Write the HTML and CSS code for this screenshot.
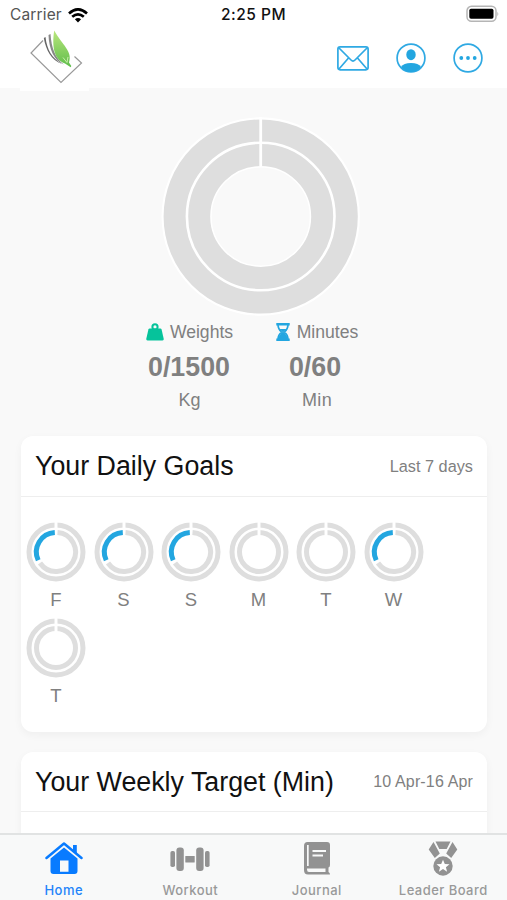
FILE: index.html
```
<!DOCTYPE html>
<html lang="en">
<head>
<meta charset="utf-8">
<title>Home</title>
<link rel="stylesheet" href="styles.css">
</head>
<body>
<svg class="defs" width="0" height="0" aria-hidden="true">
  <defs>
    <linearGradient id="leaf" x1="0" y1="0" x2="0" y2="1"><stop offset="0" stop-color="#b9e67c"/><stop offset="1" stop-color="#5fbd4b"/></linearGradient>
    <symbol id="ring" viewBox="0 0 60 60">
      <g fill="none" stroke="#dedede" stroke-width="5">
        <circle cx="30" cy="30" r="27"/><circle cx="30" cy="30" r="19.5"/>
      </g>
      <path d="M30 0V15" stroke="#fff" stroke-width="3"/>
    </symbol>
    <symbol id="ring-active" viewBox="0 0 60 60">
      <circle cx="30" cy="30" r="27" fill="none" stroke="#dedede" stroke-width="5"/>
      <path d="M31.5 10.5A19.5 19.5 0 1 1 14 41" fill="none" stroke="#dedede" stroke-width="5"/>
      <path d="M30 0V6" stroke="#fff" stroke-width="3"/>
      <path d="M28.8 10.5A19.5 19.5 0 0 0 12.2 38.2" fill="none" stroke="#23a6e0" stroke-width="5"/>
    </symbol>
  </defs>
</svg>
<div class="app">
  <div class="status">
    <div class="carrier"><span>Carrier</span>
      <svg width="20" height="15" viewBox="0 0 20 15"><g fill="none" stroke="#000" stroke-width="2.7"><path d="M1 5.4Q10-2.6 19 5.4"/><path d="M4.2 8.8Q10 3.8 15.8 8.8"/></g><path d="M6.9 11.2Q10 8.7 13.1 11.2L10 14.4Z"/></svg>
    </div>
    <time>2:25 PM</time>
    <svg class="battery" width="34" height="18" viewBox="0 0 34 18"><rect x="2" y="1.3" width="29" height="15" rx="4.5" fill="#fff" stroke="#b5b5b5" stroke-width="1.5"/><rect x="4.3" y="3.8" width="24.2" height="10" rx="1.7"/><path d="M32.4 6.7Q34.2 9 32.4 11.2Z" fill="#b5b5b5"/></svg>
  </div>
  <header class="header">
    <div class="logo">
      <svg width="70" height="61" viewBox="20 30 70 61">
        <path d="M43 40.500L31 53L61 82.5L81.500 63L74.500 56.500" fill="none" stroke="#999" stroke-width="1.200"/>
        <path d="M43.800 38C46 50 51 60 62 64C52 58 47 50 45.500 37" fill="#666"/>
        <path d="M48.500 35C49 49 54 61 64 64.500C55 58 51.500 48 50.500 34" fill="#888"/>
        <path d="M54.200 30.500C52.500 42 52 59 65 63.500L70.700 67.200L71.300 66L69 62.500C73 51 62 45 54.200 30.500Z" fill="url(#leaf)"/>
        <path d="M63 57.500L67 62.500L68 57" fill="none" stroke="#d4f2b4" stroke-width=".9"/>
      </svg>
    </div>
    <nav class="actions">
      <svg width="32" height="30" viewBox="0 0 32 30"><g fill="none" stroke="#2fa9e3" stroke-width="1.700" stroke-linejoin="round"><rect x=".9" y="3.800" width="30.200" height="23" rx="2.200"/><path d="M2 5L14 17Q16 19 18 17L30 5M2 26L11.500 15M30 26L20.500 15"/></g></svg>
      <svg width="30" height="30" viewBox="0 0 30 30"><circle cx="15" cy="15" r="13.900" fill="none" stroke="#2fa9e3" stroke-width="1.700"/><ellipse cx="15" cy="11.700" rx="4.700" ry="5.500" fill="#23a6e0"/><path d="M5 24Q7.500 20 15 20T25 24Q21 29 15 29T5 24Z" fill="#23a6e0"/></svg>
      <svg width="30" height="30" viewBox="0 0 30 30"><circle cx="15" cy="15" r="13.900" fill="none" stroke="#2fa9e3" stroke-width="1.700"/><g fill="#23a6e0"><circle cx="8.300" cy="15" r="1.900"/><circle cx="15" cy="15" r="1.900"/><circle cx="21.700" cy="15" r="1.900"/></g></svg>
    </nav>
  </header>
  <main class="content">
    <section class="summary">
      <svg class="chart" width="200" height="200" viewBox="0 0 200 200">
        <g fill="none" stroke="#fff" stroke-width="26"><circle cx="99.700" cy="100.500" r="86.200"/><circle cx="99.700" cy="100.500" r="62"/></g>
        <g fill="none" stroke="#dedede"><circle cx="99.700" cy="100.500" r="86.100" stroke-width="22"/><circle cx="99.700" cy="100.500" r="61.500" stroke-width="22"/></g>
        <path d="M99.700 1V50" stroke="#fff" stroke-width="2.800"/>
      </svg>
      <div class="stats">
        <div class="stat">
          <div class="label"><svg width="18" height="18" viewBox="0 0 18 18"><path d="M3.700 5.500H14.300Q15.300 5.500 15.600 6.500L17.700 15.800Q18 17.600 16.500 17.600H1.500Q0 17.600.3 15.800L2.400 6.500Q2.700 5.500 3.700 5.500Z" fill="#06c39b"/><circle cx="9" cy="3.900" r="2.600" fill="none" stroke="#06c39b" stroke-width="2"/></svg><span>Weights</span></div>
          <strong>0/1500</strong><span class="unit">Kg</span>
        </div>
        <div class="stat stat-minutes">
          <div class="label"><svg width="14" height="18" viewBox="0 0 14 18"><path d="M.3 1.300H13.700M.3 16.700H13.700" stroke="#23a6e0" stroke-width="2.400"/><path d="M2 2Q2 6 5.500 9Q2 12 2 16M12 2Q12 6 8.500 9Q12 12 12 16" fill="none" stroke="#23a6e0" stroke-width="1.600"/><path d="M3.500 6H10.500L7 9.500ZM7 8.500Q11.500 12 11.500 16H2.500Q2.500 12 7 8.500Z" fill="#23a6e0"/></svg><span>Minutes</span></div>
          <strong>0/60</strong><span class="unit">Min</span>
        </div>
      </div>
    </section>
    <section class="card daily">
      <div class="card-head"><h2>Your Daily Goals</h2><span class="range">Last 7 days</span></div>
      <div class="days">
        <div class="day"><svg><use href="#ring-active"/></svg><span>F</span></div>
        <div class="day"><svg><use href="#ring-active"/></svg><span>S</span></div>
        <div class="day"><svg><use href="#ring-active"/></svg><span>S</span></div>
        <div class="day"><svg><use href="#ring"/></svg><span>M</span></div>
        <div class="day"><svg><use href="#ring"/></svg><span>T</span></div>
        <div class="day"><svg><use href="#ring-active"/></svg><span>W</span></div>
        <div class="day"><svg><use href="#ring"/></svg><span>T</span></div>
      </div>
    </section>
    <section class="card weekly">
      <div class="card-head"><h2>Your Weekly Target (Min)</h2><span class="range date">10 Apr-16 Apr</span></div>
    </section>
  </main>
  <nav class="tabs">
    <div class="tab active"><svg width="38" height="36" viewBox="0 0 38 36"><path d="M1.500 18L19 3.500L36.500 18" fill="none" stroke="#087bff" stroke-width="2.500" stroke-linecap="round" stroke-linejoin="round"/><path d="M28 10V5H31.800V14M5.500 18.500L19 7.500L32.500 18.500V31Q32.500 34 29.500 34H8.500Q5.500 34 5.500 31ZM15 20.500V31.800H23.500V20.500Z" fill="#087bff" fill-rule="evenodd"/></svg><span>Home</span></div>
    <div class="tab"><svg width="40" height="36" viewBox="0 0 40 36"><g fill="#929292"><rect x=".4" y="11" width="4.600" height="16" rx="1.800"/><rect x="6.400" y="7.500" width="7.400" height="23.500" rx="3"/><rect x="15.300" y="16" width="9.400" height="6.500" rx=".6"/><rect x="26.200" y="7.500" width="7.400" height="23.500" rx="3"/><rect x="35" y="11" width="4.600" height="16" rx="1.800"/></g></svg><span>Workout</span></div>
    <div class="tab"><svg width="28" height="36" viewBox="0 0 28 36"><path d="M4.500 2H24Q27 2 27 5V25Q27 27 25.500 27.500V32Q27 32.500 27 34.500H5Q1 34.500 1 30V6Q1 2 4.500 2ZM4 5V26H5.700V5ZM4 28.500V29.500Q4 32 6 32H22.500V28.500ZM9.500 10V12H23V10ZM9.500 14.500V16.500H20V14.500Z" fill="#929292" fill-rule="evenodd"/></svg><span>Journal</span></div>
    <div class="tab"><svg width="30" height="36" viewBox="0 0 30 36"><g fill="#929292"><path d="M7.500 1.500H22.500L18.700 9H11.300ZM5.500 2L11.800 13.500L6.800 18L.7 9.500ZM24.500 2L18.200 13.500L23.200 18L29.300 9.500Z"/><circle cx="15" cy="26" r="9.700"/></g><path d="M15 19.700L16.800 24L21.500 24.200L17.900 27.200L19.100 31.700L15 29.100L10.900 31.700L12.100 27.200L8.500 24.200L13.200 24Z" fill="#fff"/></svg><span>Leader Board</span></div>
  </nav>
</div>
</body>
</html>
```
FILE: styles.css
```
* { box-sizing: border-box; }
body { margin: 0; background: #f9f9f9; font-family: "Liberation Sans", sans-serif; color: #808080; }
svg { display: block; flex: none; }
.defs { position: absolute; }
.app { width: 507px; height: 900px; display: flex; flex-direction: column; overflow: hidden; }
.status { flex: none; height: 30px; display: grid; grid-template-columns: 1fr auto 1fr; align-items: center; padding: 0 8px 0 10px; background: #fff; font: 15.5px/20px Inter, sans-serif; color: #555; }
.carrier { display: flex; gap: 6px; align-items: center; letter-spacing: .15px; }
.status time { color: #111; font-weight: 500; letter-spacing: .5px; margin-right: 2px; }
.battery { justify-self: end; margin-top: -2px; }
.header { flex: none; height: 58px; display: flex; justify-content: space-between; padding: 0 24px 0 20px; background: #fff; }
.logo { z-index: 1; width: 69px; height: 61px; background: #fff; }
.actions { display: flex; gap: 27px; padding-top: 13px; }
.content { flex: 1; min-height: 0; overflow: hidden; padding: 28px 20px 0 21px; }
.summary { height: 320px; }
.chart { margin: 0 auto 0 140px; }
.stats { display: flex; padding: 5px 0 0 125px; gap: 43px; }
.stat { display: flex; flex-direction: column; align-items: center; width: 87px; }
.stat-minutes { width: 82px; }
.label { display: flex; align-items: center; gap: 6px; font-size: 17.6px; line-height: 22px; white-space: nowrap; }
.stat-minutes .label { gap: 7px; }
.stat strong { font-size: 26.8px; line-height: 30px; margin-top: 9px; margin-right: 1px; }
.unit { font-size: 18px; line-height: 22px; margin-top: 7px; }
.stat-minutes strong { margin-right: 4px; }
.stat-minutes .unit { letter-spacing: .3px; }
.card { background: #fff; border-radius: 12px; box-shadow: 0 3px 9px rgba(0, 0, 0, .045); }
.daily { height: 296px; margin-bottom: 20px; }
.weekly { height: 200px; }
.card-head { height: 61px; display: flex; align-items: center; justify-content: space-between; padding: 0 14px; border-bottom: 1px solid #eee; }
.weekly .card-head { height: 60px; }
h2 { margin: 0; font-size: 26.8px; line-height: 30px; font-weight: 400; color: #111; white-space: nowrap; }
.range { font-size: 16.3px; line-height: 20px; white-space: nowrap; }
.date { font-size: 16px; letter-spacing: .15px; }
.days { display: grid; grid-template-columns: repeat(6, 67.5px); grid-auto-rows: 96px; padding: 25px 0 0 5px; }
.day { width: 60px; text-align: center; }
.day svg { width: 60px; height: 60px; }
.day span { display: block; font-size: 18.5px; line-height: 22px; margin-top: 7px; }
.tabs { flex: none; height: 67px; display: grid; grid-template-columns: repeat(4, 126.5px); border-top: 2px solid #e1e3e3; background: #f8f9f9; font: 500 13px/16px Inter, sans-serif; letter-spacing: .45px; color: #999; }
.tab { display: flex; flex-direction: column; align-items: center; padding: 5px 0 0 1px; gap: 6px; white-space: nowrap; }
.active { color: #2384fa; }
```
